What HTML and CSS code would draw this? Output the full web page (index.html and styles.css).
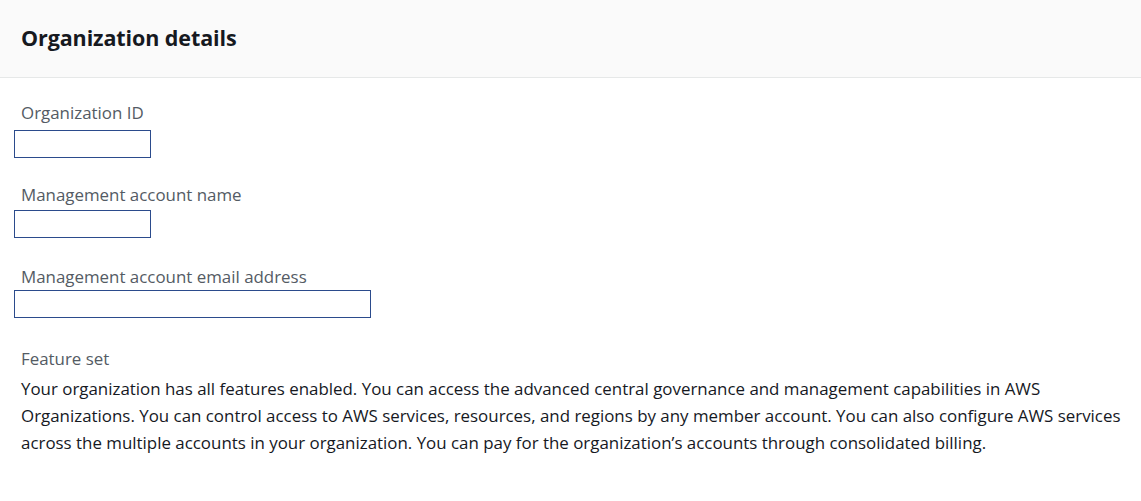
FILE: index.html
```html
<!DOCTYPE html>
<html lang="en">
<head>
<meta charset="utf-8">
<title>Organization details</title>
<link rel="stylesheet" href="styles.css">
</head>
<body>
<section class="panel">
  <header class="panel-header">
    <h2 class="panel-title">Organization details</h2>
  </header>
  <div class="panel-body">
    <div class="field field-1">
      <div class="field-label">Organization ID</div>
      <div class="field-box short"></div>
    </div>
    <div class="field field-2">
      <div class="field-label">Management account name</div>
      <div class="field-box short"></div>
    </div>
    <div class="field field-3">
      <div class="field-label">Management account email address</div>
      <div class="field-box long"></div>
    </div>
    <div class="feature">
      <div class="field-label">Feature set</div>
      <p class="feature-text">Your organization has all features enabled. You can access the advanced central governance and management capabilities in AWS Organizations. You can control access to AWS services, resources, and regions by any member account. You can also configure AWS services across the multiple accounts in your organization. You can pay for the organization’s accounts through consolidated billing.</p>
    </div>
  </div>
</section>
</body>
</html>
```

FILE: styles.css
```css
html, body {
  margin: 0;
  padding: 0;
  background: #ffffff;
}
body {
  font-family: "Open Sans", "Noto Sans", sans-serif;
  color: #16191f;
}
.panel-header {
  box-sizing: border-box;
  height: 78px;
  background: #fafafa;
  border-bottom: 1px solid #e6e8e8;
  display: flex;
  align-items: center;
  padding: 0 21px 2px 21px;
}
.panel-title {
  margin: 0;
  font-size: 21.5px;
  font-weight: 700;
  color: #16191f;
  letter-spacing: -0.1px;
}
.panel-body {
  padding: 24px 14px 0 14px;
}
.field-label {
  font-size: 16.9px;
  line-height: 22px;
  color: #545b64;
  padding-left: 7px;
}
.field-box {
  height: 26px;
  border: 1px solid #2b4b8c;
}
.field-1 { margin-bottom: 26px; }
.field-1 .field-box { margin-top: 6px; }
.field-2 { margin-bottom: 28px; }
.field-2 .field-box { margin-top: 4px; }
.field-3 { margin-bottom: 30px; }
.field-3 .field-box { margin-top: 2px; }
.field-box.short { width: 135px; }
.field-box.long { width: 355px; }
.feature .field-label {
  margin-bottom: 5px;
}
.feature-text {
  margin: 0;
  padding-left: 7px;
  font-size: 16.9px;
  line-height: 27px;
  color: #16191f;
  max-width: 1110px;
}
```
